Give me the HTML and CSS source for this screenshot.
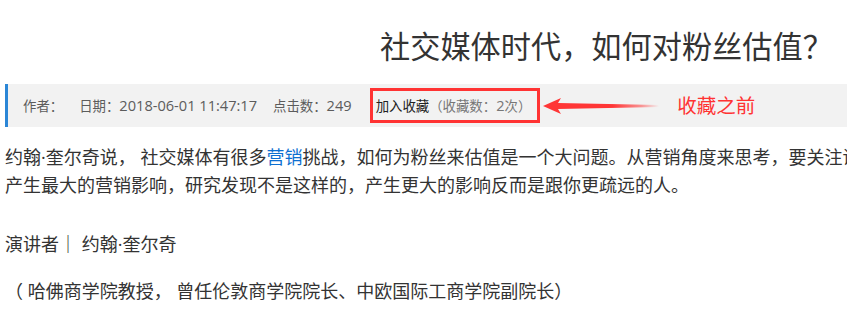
FILE: index.html
```html
<!DOCTYPE html>
<html lang="zh-CN">
<head>
<meta charset="utf-8">
<title>社交媒体时代，如何对粉丝估值？</title>
<link rel="stylesheet" href="styles.css">
</head>
<body>
<div class="page">
  <h1 class="title">社交媒体时代，如何对粉丝估值？</h1>
  <div class="meta">
    <span class="meta-item">作者：</span>
    <span class="meta-item">日期：<span class="num">2018-06-01 11:47:17</span></span>
    <span class="meta-item">点击数：<span class="num">249</span></span>
    <span class="fav"><span class="fav-link">加入收藏</span>（收藏数：<span class="num">2</span>次）</span>
    <svg class="arrow" width="120" height="22" viewBox="0 0 120 22" aria-hidden="true">
      <defs>
        <linearGradient id="arrowFade" x1="0" y1="0" x2="1" y2="0">
          <stop offset="0" stop-color="#ff3636" stop-opacity="1"/>
          <stop offset="0.6" stop-color="#ff3636" stop-opacity="1"/>
          <stop offset="0.85" stop-color="#ff3636" stop-opacity="0.5"/>
          <stop offset="1" stop-color="#ff3636" stop-opacity="0"/>
        </linearGradient>
      </defs>
      <path d="M2 11 L20 3 L17 8 L118 10 L118 12 L17 14 L20 19 Z" fill="url(#arrowFade)"/>
    </svg>
    <span class="note">收藏之前</span>
  </div>
  <p class="lead">约翰·奎尔奇说， 社交媒体有很多<a class="link" href="#">营销</a>挑战，如何为粉丝来估值是一个大问题。从营销角度来思考，要关注谁能<br>产生最大的营销影响，研究发现不是这样的，产生更大的影响反而是跟你更疏远的人。</p>
  <p class="speaker">演讲者｜ 约翰·奎尔奇</p>
  <p class="bio">（ 哈佛商学院教授， 曾任伦敦商学院院长、中欧国际工商学院副院长）</p>
</div>
</body>
</html>
```
FILE: styles.css
```css
html, body {
  margin: 0;
  overflow: hidden;
  background: #fff;
}

body {
  font-family: "Open Sans", "Noto Sans CJK SC", sans-serif;
  color: #333;
}

.page {
  width: 900px;
  padding-left: 5px;
}

.title {
  margin: 27px 0 17px;
  padding-left: 375px;
  font-size: 30.2px;
  font-weight: normal;
  line-height: 40px;
  color: #333;
}

.meta {
  display: flex;
  align-items: center;
  background: #f2f2f2;
  border-left: 3px solid #2b86d6;
  padding: 4px 0 4px 15px;
  font-size: 13.4px;
  color: #5c5c5c;
}

.num {
  font-size: 14.6px;
}

.meta-item {
  margin-right: 16px;
  line-height: 28px;
}

.fav {
  margin-left: 2px;
  border: 3px solid #ff3333;
  padding: 0 6px 0 3px;
  line-height: 28px;
  color: #777;
}

.fav-link {
  color: #222;
}

.arrow {
  display: block;
  margin-left: 1px;
}

.note {
  margin-left: 16px;
  color: #ff3333;
  font-size: 19.5px;
  line-height: 28px;
}

p {
  font-size: 18px;
  line-height: 28px;
  color: #333;
}

.lead {
  margin: 16px 0 31px;
  white-space: nowrap;
}

.link {
  color: #0c6fd1;
  text-decoration: none;
}

.speaker {
  margin: 0 0 19px;
}

.bio {
  margin: 0;
}
```
